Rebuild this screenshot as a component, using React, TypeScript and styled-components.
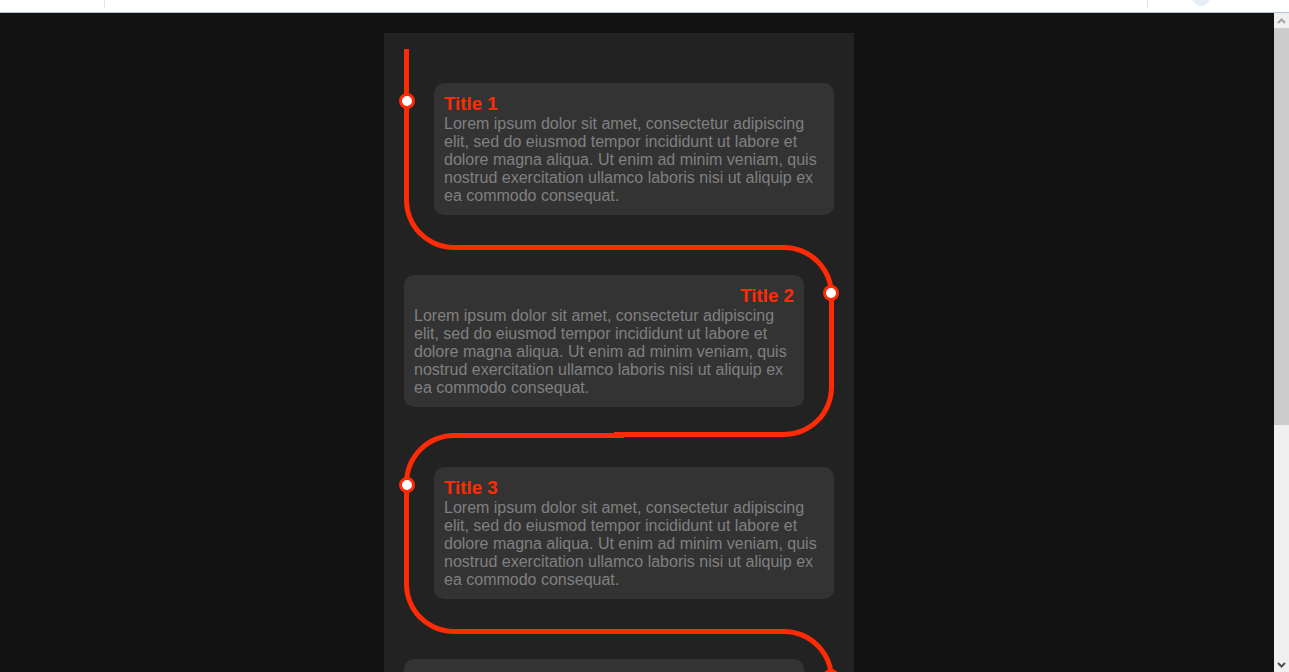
import React from 'react';
import styled, { createGlobalStyle, css } from 'styled-components';

const GlobalStyle = createGlobalStyle`
  html, body {
    margin: 0;
    height: 100%;
    overflow: hidden;
    background: #111;
    font-family: "Liberation Sans", Arial, sans-serif;
  }
`;

const Shell = styled.div`
  display: flex;
  flex-direction: column;
  height: 100vh;
`;

/* thin strip of browser chrome at the top of the shot */
const TopStrip = styled.div`
  display: flex;
  height: 12px;
  background: #fff;
  border-bottom: 1px solid #b9c6d2;
  overflow: hidden;
`;

const StripDivider = styled.span<{ $left: number }>`
  width: 1px;
  height: 8px;
  margin-left: ${p => p.$left}px;
  background: #e4e4e4;
`;

const StripBubble = styled.span`
  width: 18px;
  height: 18px;
  margin: -12px 0 0 44px;
  border-radius: 50%;
  background: #e7edf4;
`;

const Body = styled.div`
  flex: 1;
  display: flex;
  min-height: 0;
`;

const Viewport = styled.main`
  flex: 1;
  overflow: hidden;
  background: #111;
`;

const Timeline = styled.section`
  width: 430px;
  margin: 20px 0 20px 384px;
  padding: 20px;
  background: #222;
`;

type Side = 'left' | 'right';

const Card = styled.div<{ $side: Side; $first?: boolean; $last?: boolean }>`
  position: relative;
  max-width: 400px;
  padding: ${p => (p.$side === 'left' ? '30px 0 30px 30px' : '30px 30px 30px 0')};

  &::before {
    content: '';
    position: absolute;
    width: 50%;
    border: solid #ff2b06;
    ${p =>
      p.$side === 'left'
        ? css`
            left: 0;
            top: -4.5px;
            bottom: -4.5px;
            border-width: 5px 0 5px 5px;
            border-radius: 50px 0 0 50px;
          `
        : css`
            right: 0;
            top: 0;
            bottom: 0;
            border-width: 5px 5px 5px 0;
            border-radius: 0 50px 50px 0;
          `}
    ${p =>
      p.$first &&
      css`
        border-top: 0;
        border-top-left-radius: 0;
      `}
    ${p =>
      p.$last &&
      css`
        border-bottom: 0;
        border-bottom-left-radius: 0;
        border-bottom-right-radius: 0;
      `}
  }
`;

const Info = styled.div`
  display: flex;
  flex-direction: column;
  background: #333;
  color: gray;
  border-radius: 10px;
  padding: 10px;
`;

const Title = styled.h3<{ $side: Side }>`
  position: relative;
  margin: 0;
  font-size: 18.72px;
  line-height: 22px;
  font-weight: bold;
  color: #ff2b06;
  text-align: ${p => (p.$side === 'left' ? 'left' : 'right')};

  /* the dot sitting on the line */
  &::before {
    content: '';
    position: absolute;
    width: 10px;
    height: 10px;
    background: #fff;
    border-radius: 999px;
    border: 3px solid #ff2b06;
    ${p => (p.$side === 'left' ? 'left: -45px;' : 'right: -45px;')}
  }
`;

const Text = styled.p`
  margin: 0;
  font-size: 16px;
  line-height: 18px;
`;

const Scrollbar = styled.div`
  display: flex;
  flex-direction: column;
  width: 15px;
  background: #f0f0f0;
`;

const ScrollButton = styled.div<{ $color: string }>`
  display: flex;
  align-items: center;
  justify-content: center;
  height: 15px;
  color: ${p => p.$color};
`;

const Thumb = styled.div`
  height: 397px;
  background: #cdcdcd;
`;

const Track = styled.div`
  flex: 1;
`;

const LOREM =
  'Lorem ipsum dolor sit amet, consectetur adipiscing elit, sed do eiusmod tempor incididunt ut labore et dolore magna aliqua. Ut enim ad minim veniam, quis nostrud exercitation ullamco laboris nisi ut aliquip ex ea commodo consequat.';

const items = [1, 2, 3, 4, 5].map(n => ({ title: `Title ${n}`, text: LOREM }));

const Chevron = ({ up }: { up?: boolean }) => (
  <svg width="9" height="6" viewBox="0 0 9 6">
    <path
      d={up ? 'M1 5 L4.5 1.5 L8 5' : 'M1 1 L4.5 4.5 L8 1'}
      fill="none"
      stroke="currentColor"
      strokeWidth="2"
    />
  </svg>
);

const App = () => {
  return (
    <Shell>
      <GlobalStyle />
      <TopStrip>
        <StripDivider $left={104} />
        <StripDivider $left={1042} />
        <StripBubble />
      </TopStrip>
      <Body>
        <Viewport>
          <Timeline>
            {items.map((item, i) => {
              const side: Side = i % 2 === 0 ? 'left' : 'right';
              return (
                <Card key={item.title} $side={side} $first={i === 0} $last={i === items.length - 1}>
                  <Info>
                    <Title $side={side}>{item.title}</Title>
                    <Text>{item.text}</Text>
                  </Info>
                </Card>
              );
            })}
          </Timeline>
        </Viewport>
        <Scrollbar>
          <ScrollButton $color="#a3a3a3">
            <Chevron up />
          </ScrollButton>
          <Thumb />
          <Track />
          <ScrollButton $color="#505050">
            <Chevron />
          </ScrollButton>
        </Scrollbar>
      </Body>
    </Shell>
  );
};

export default App;
